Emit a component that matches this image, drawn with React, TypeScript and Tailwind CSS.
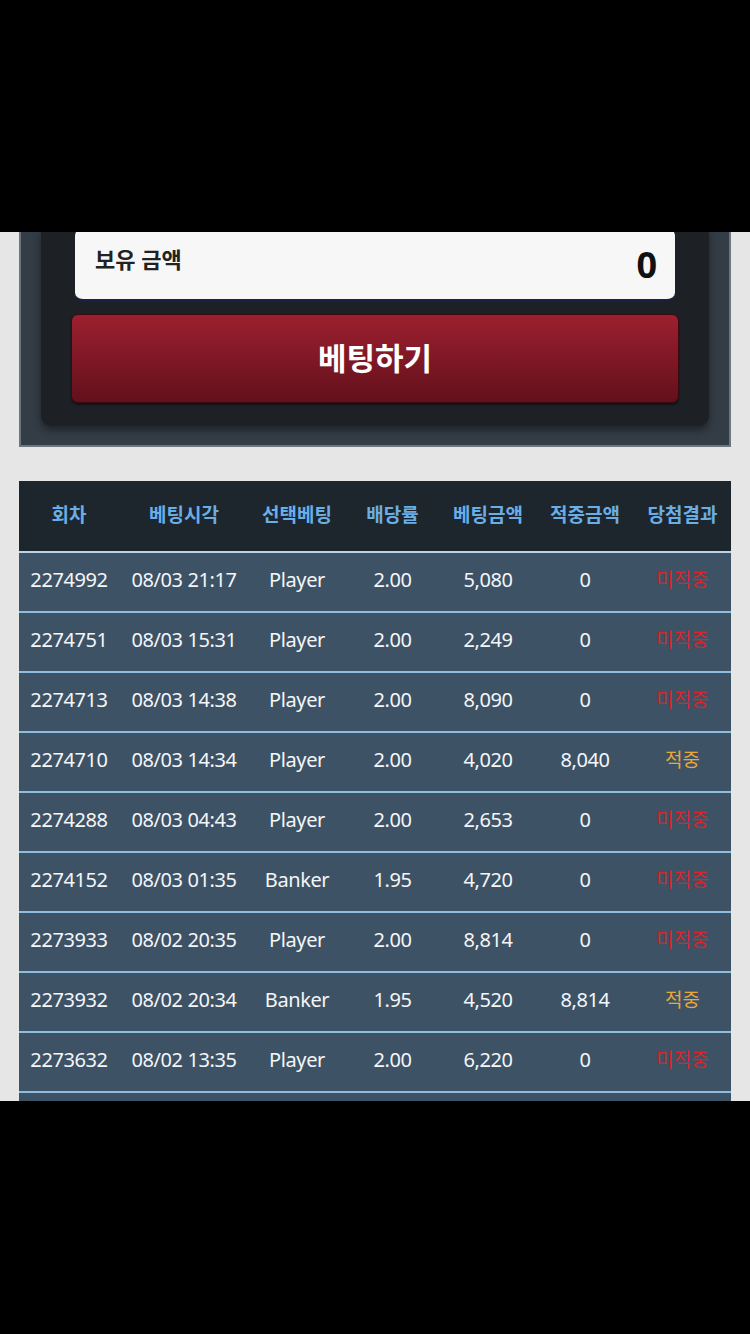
const rows = [
  ["2274992", "08/03 21:17", "Player", "2.00", "5,080", "0", "미적중"],
  ["2274751", "08/03 15:31", "Player", "2.00", "2,249", "0", "미적중"],
  ["2274713", "08/03 14:38", "Player", "2.00", "8,090", "0", "미적중"],
  ["2274710", "08/03 14:34", "Player", "2.00", "4,020", "8,040", "적중"],
  ["2274288", "08/03 04:43", "Player", "2.00", "2,653", "0", "미적중"],
  ["2274152", "08/03 01:35", "Banker", "1.95", "4,720", "0", "미적중"],
  ["2273933", "08/02 20:35", "Player", "2.00", "8,814", "0", "미적중"],
  ["2273932", "08/02 20:34", "Banker", "1.95", "4,520", "8,814", "적중"],
  ["2273632", "08/02 13:35", "Player", "2.00", "6,220", "0", "미적중"],
];

const headers = ["회차", "베팅시각", "선택베팅", "배당률", "베팅금액", "적중금액", "당첨결과"];
const cols = "grid grid-cols-[100px_130px_96px_95px_96px_98px_97px]";

export default function App() {
  return (
    <div
      className="w-[750px] h-[1334px] bg-black flex flex-col"
      style={{ fontFamily: '"Noto Sans", "Noto Sans CJK KR", sans-serif' }}
    >
      <div className="h-[232px] shrink-0" />

      <div className="h-[869px] shrink-0 bg-[#e6e6e6] overflow-hidden flex flex-col">
        {/* betting panel (top scrolled off) */}
        <div className="mx-[19px] bg-[#343d46] border-x-2 border-b-2 border-[#6b7780] px-[20px] pb-[19px]">
          <div className="bg-[#1d2126] rounded-b-[10px] shadow-[0_4px_8px_rgba(0,0,0,0.45)] px-[30px] pb-[23px]">
            <div className="mx-[4px] -mt-[4px] h-[73px] bg-[#f7f7f8] rounded-[8px] border-b-2 border-[#1b2148] flex items-center justify-between px-[20px] pt-[2px]">
              <span className="text-[22px] font-bold text-[#222] -mt-[10px]">보유 금액</span>
              <span className="text-[36px] font-bold text-[#111] leading-none -mr-[2px]">0</span>
            </div>
            <button className="mt-[13px] w-full h-[89px] rounded-[7px] border border-[#3a0a10] bg-gradient-to-b from-[#9d202f] to-[#63101c] shadow-[0_2px_2px_rgba(0,0,0,0.5)] flex items-center justify-center">
              <span
                className="text-[31px] font-bold text-white -mt-[2px]"
                style={{ fontFamily: '"Noto Sans CJK KR", sans-serif' }}
              >
                베팅하기
              </span>
            </button>
          </div>
        </div>

        {/* history table */}
        <div className="mx-[19px] mt-[34px]">
          <div className={`${cols} h-[72px] bg-[#1d252d] border-b-2 border-[#b9d5ea] items-center`}>
            {headers.map((h) => (
              <div
                key={h}
                className="text-center text-[19px] font-bold text-[#6aaee6] -mt-[4px]"
                style={{ fontFamily: '"Noto Sans CJK KR", sans-serif' }}
              >
                {h}
              </div>
            ))}
          </div>
          {rows.map((r) => (
            <div
              key={r[0]}
              className={`${cols} h-[60px] bg-[#3e5266] border-b-2 border-[#8fbde0] items-center text-[#f4f6f8] text-[20px]`}
            >
              {r.slice(0, 6).map((c, i) => (
                <div key={i} className="text-center -mt-[5px] tracking-[-0.4px]">
                  {c}
                </div>
              ))}
              <div
                className={`text-center -mt-[5px] text-[19px] ${r[6] === "적중" ? "text-[#e8a83a]" : "text-[#d8262b]"}`}
                style={{ fontFamily: '"Noto Sans CJK KR", sans-serif' }}
              >
                {r[6]}
              </div>
            </div>
          ))}
          {/* next row, cut off by the viewport */}
          <div className="h-[60px] bg-[#3e5266]" />
        </div>
      </div>

      <div className="flex-1" />
    </div>
  );
}
